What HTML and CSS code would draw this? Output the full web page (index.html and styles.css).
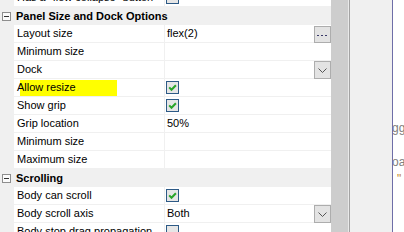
FILE: index.html
```html
<!DOCTYPE html>
<html lang="en">
<head>
    <meta charset="UTF-8">
    <title>Properties</title>
    <link rel="stylesheet" href="styles.css">
</head>
<body>
    <div class="frame">
        <div class="grid">
            <div class="rows">
                <div class="row">
                    <div class="gutter"></div>
                    <div class="name">Has a "flow collapse" button</div>
                    <div class="value">
                        <svg class="check" width="13" height="13" viewBox="0 0 13 13"><rect x="0.5" y="0.5" width="12" height="12" fill="#e6e6e6" stroke="#2d5a86"/></svg>
                    </div>
                </div>
                <div class="category">
                    <svg class="toggle" width="9" height="9" viewBox="0 0 9 9"><rect x="0.5" y="0.5" width="8" height="8" fill="#fbfbfb" stroke="#8e8e8e"/><path d="M2 4.5h5" stroke="#333"/></svg>
                    <span>Panel Size and Dock Options</span>
                </div>
                <div class="row">
                    <div class="gutter"></div>
                    <div class="name">Layout size</div>
                    <div class="value">
                        <span>flex(2)</span>
                        <span class="btn dots">
                            <svg width="15" height="15" viewBox="0 0 15 15"><rect x="2" y="8" width="2" height="1" fill="#3a3a6a"/><rect x="6" y="8" width="2" height="1" fill="#3a3a6a"/><rect x="10" y="8" width="2" height="1" fill="#3a3a6a"/></svg>
                        </span>
                    </div>
                </div>
                <div class="row">
                    <div class="gutter"></div>
                    <div class="name">Minimum size</div>
                    <div class="value"></div>
                </div>
                <div class="row">
                    <div class="gutter"></div>
                    <div class="name">Dock</div>
                    <div class="value">
                        <span class="btn drop">
                            <svg width="15" height="16" viewBox="0 0 15 16"><polyline points="3.5,6.5 7.5,10.5 11.5,6.5" fill="none" stroke="#555"/></svg>
                        </span>
                    </div>
                </div>
                <div class="row">
                    <div class="gutter"></div>
                    <div class="name marked">Allow resize</div>
                    <div class="value">
                        <svg class="check" width="13" height="13" viewBox="0 0 13 13"><rect x="0.5" y="0.5" width="12" height="12" fill="#e6e6e6" stroke="#2d5a86"/><path d="M3.2 6.4l2.3 2.4 4.4-4.6" fill="none" stroke="#2aa52a" stroke-width="2"/></svg>
                    </div>
                </div>
                <div class="row">
                    <div class="gutter"></div>
                    <div class="name">Show grip</div>
                    <div class="value">
                        <svg class="check" width="13" height="13" viewBox="0 0 13 13"><rect x="0.5" y="0.5" width="12" height="12" fill="#e6e6e6" stroke="#2d5a86"/><path d="M3.2 6.4l2.3 2.4 4.4-4.6" fill="none" stroke="#2aa52a" stroke-width="2"/></svg>
                    </div>
                </div>
                <div class="row">
                    <div class="gutter"></div>
                    <div class="name">Grip location</div>
                    <div class="value"><span>50%</span></div>
                </div>
                <div class="row">
                    <div class="gutter"></div>
                    <div class="name">Minimum size</div>
                    <div class="value"></div>
                </div>
                <div class="row">
                    <div class="gutter"></div>
                    <div class="name">Maximum size</div>
                    <div class="value"></div>
                </div>
                <div class="category">
                    <svg class="toggle" width="9" height="9" viewBox="0 0 9 9"><rect x="0.5" y="0.5" width="8" height="8" fill="#fbfbfb" stroke="#8e8e8e"/><path d="M2 4.5h5" stroke="#333"/></svg>
                    <span>Scrolling</span>
                </div>
                <div class="row">
                    <div class="gutter"></div>
                    <div class="name">Body can scroll</div>
                    <div class="value">
                        <svg class="check" width="13" height="13" viewBox="0 0 13 13"><rect x="0.5" y="0.5" width="12" height="12" fill="#e6e6e6" stroke="#2d5a86"/><path d="M3.2 6.4l2.3 2.4 4.4-4.6" fill="none" stroke="#2aa52a" stroke-width="2"/></svg>
                    </div>
                </div>
                <div class="row">
                    <div class="gutter"></div>
                    <div class="name">Body scroll axis</div>
                    <div class="value">
                        <span>Both</span>
                        <span class="btn drop">
                            <svg width="15" height="16" viewBox="0 0 15 16"><polyline points="3.5,6.5 7.5,10.5 11.5,6.5" fill="none" stroke="#555"/></svg>
                        </span>
                    </div>
                </div>
                <div class="row">
                    <div class="gutter"></div>
                    <div class="name">Body stop drag propagation</div>
                    <div class="value">
                        <svg class="check" width="13" height="13" viewBox="0 0 13 13"><rect x="0.5" y="0.5" width="12" height="12" fill="#e6e6e6" stroke="#2d5a86"/></svg>
                    </div>
                </div>
            </div>
        </div>
        <div class="scrollbar"></div>
        <div class="panel"></div>
        <div class="editor">
            <div class="line">gg</div>
            <div class="line"></div>
            <div class="line">oa</div>
            <div class="line quote">"</div>
        </div>
    </div>
</body>
</html>
```

FILE: styles.css
```css
body {
    margin: 0;
    font-family: "Liberation Sans", Arial, sans-serif;
    font-size: 11px;
    color: #000;
    background: #fff;
    overflow: hidden;
}
.frame {
    display: flex;
    height: 232px;
    background: #e9e9e9;
}
.grid {
    width: 331px;
    overflow: hidden;
    background: #fff;
}
.rows {
    margin-top: -11px;
}
.row {
    display: flex;
    height: 18px;
}
.gutter {
    width: 14px;
    background: #f0f0f0;
}
.name {
    width: 150px;
    padding-left: 3px;
    box-sizing: border-box;
    border-bottom: 1px solid #f0f0f0;
    line-height: 17px;
    white-space: nowrap;
    overflow: hidden;
}
.name.marked {
    background: linear-gradient(#ffff00, #ffff00) no-repeat 6px 1px / 97px 16px;
}
.value {
    flex: 1;
    display: flex;
    align-items: center;
    padding-left: 2px;
    border-left: 1px solid #f0f0f0;
    border-bottom: 1px solid #f0f0f0;
    line-height: 17px;
    white-space: nowrap;
}
.check {
    display: block;
    margin-left: -1px;
}
.btn {
    margin-left: auto;
    width: 17px;
    box-sizing: border-box;
    border: 1px solid #adadad;
    background: #e3e3e3;
    align-self: flex-start;
}
.btn svg {
    display: block;
}
.btn.dots {
    height: 17px;
    margin-top: 1px;
    margin-bottom: -1px;
}
.btn.drop {
    height: 18px;
    margin-bottom: -1px;
}
.category {
    display: flex;
    align-items: center;
    height: 18px;
    padding-left: 2px;
    background: #f0f0f0;
    font-weight: bold;
}
.toggle {
    display: block;
    margin-right: 5px;
}
.scrollbar {
    width: 17px;
    margin-right: 1px;
    background: #cdcdcd;
}
.panel {
    width: 42px;
    background: #f0f0f0;
    border-left: 1px solid #a3a3a3;
    border-right: 1px solid #6e6ea8;
}
.editor {
    flex: 1;
    background: #fff;
    overflow: hidden;
    padding-top: 120px;
    font-size: 12px;
    color: #808080;
}
.line {
    height: 17px;
    line-height: 17px;
    margin-left: -1px;
    white-space: nowrap;
}
.line.quote {
    margin-left: 4px;
    color: #c2852d;
}
```
